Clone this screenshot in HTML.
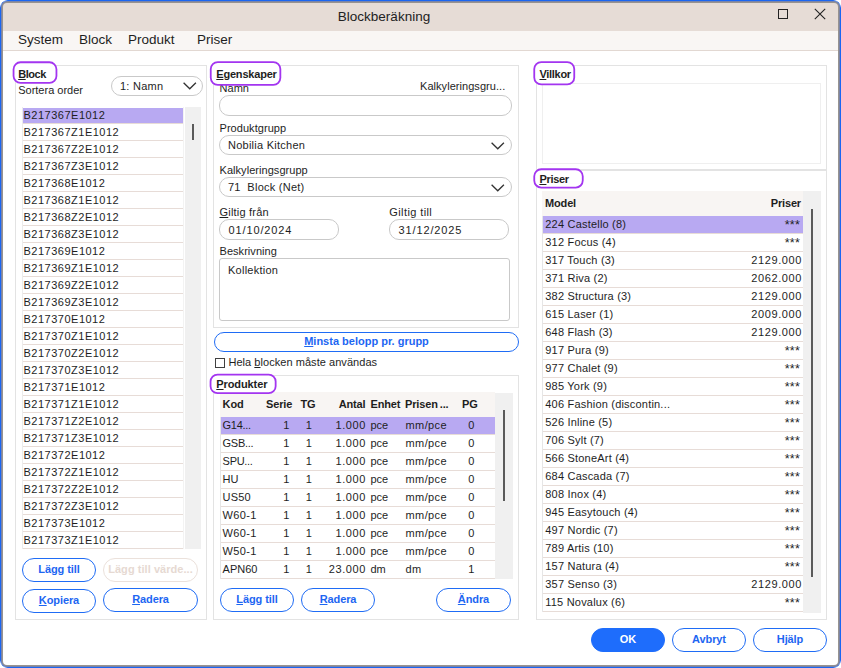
<!DOCTYPE html><html lang="sv"><head><meta charset="utf-8"><title>Blockberäkning</title><style>html,body{margin:0;padding:0;background:#fff;}
body{width:841px;height:668px;overflow:hidden;font-family:"Liberation Sans",sans-serif;font-size:11px;color:#1e1e1e;}
#win{position:absolute;left:0;top:0;width:841px;height:668px;border-radius:8px;background:#fff;overflow:hidden;}
#frame{left:0;top:0;width:841px;height:668px;border:1px solid #1a66f2;border-radius:7px;box-shadow:inset 0 0 0 1px #7a84a8, inset 0 0 0 2px #979390;z-index:10;}
#win *{box-sizing:border-box;}
#win>div,#win>div>span,#win>div>svg{position:absolute;}
#titlebar{left:2px;top:2px;width:837px;height:29px;background:#e6dcd6;}
#title{left:0;width:764px;text-align:center;top:7px;font-size:13.5px;line-height:16px;color:#222;}
#maxi{left:775px;top:6px;}
#closei{left:812px;top:6px;}
#menubar{left:2px;top:31px;width:837px;height:20px;background:#f9f6f4;border-bottom:1px solid #e2d8d2;font-size:13.5px;}
#menubar span{top:1px;line-height:16px;margin-left:-2px;}
.gb{border:1px solid #e3e3e3;}
.glw{z-index:3;}
.glt{position:absolute;font-weight:bold;font-size:11px;line-height:14px;white-space:nowrap;letter-spacing:-0.45px;}
.lbl{white-space:nowrap;line-height:13px;}
.combo,.inp{border:1px solid #c9c9c9;border-radius:10px;background:#fff;}
.ta{border:1px solid #c9c9c9;border-radius:3px;background:#fff;}
.ct{position:absolute;top:3px;line-height:13px;white-space:nowrap;margin-left:-1px;letter-spacing:0.25px;}
.chev{position:absolute;}
.num{letter-spacing:0.6px;}
#blist{left:22px;top:107px;width:162px;border-left:1px solid #ececec;border-right:1px solid #f3f3f3;}
.li{height:17px;line-height:14px;border-top:1px solid #fff;border-bottom:1px solid #e7dcd7;padding-left:0.5px;background-clip:padding-box;letter-spacing:0.5px;white-space:nowrap;}
.li.sel{background-color:#b8a9f2;}
.track{background:#f0f0f0;}
.thumb{width:2px;background:#5a5a5a;}
.btn{height:23px;border:1px solid #1f6cf5;border-radius:12px;background:#fff;color:#1d66f2;font-weight:bold;font-size:11px;letter-spacing:-0.1px;text-align:center;line-height:21px;white-space:nowrap;}
.btn.dis{border-color:#ebe1db;color:#e6d9d2;}
.btn.pri{background:#1e6dfc;border-color:#1e6dfc;color:#fff;}
.cb{width:10px;height:10px;border:1px solid #404040;background:#fff;}
#ptab{left:220px;top:392px;width:275px;}
#prtab{left:542px;top:191px;width:261px;}
.th{position:relative;height:25px;background:#f8f5f3;font-weight:bold;}
.th>span{position:absolute;top:6px;letter-spacing:-0.15px;line-height:13px;white-space:nowrap;}
.tr{position:relative;height:18px;border-bottom:1px solid #e7dcd7;background-clip:padding-box;}
.tr.sel{background-color:#b8a9f2;}
.tr>span{position:absolute;top:2px;line-height:13px;white-space:nowrap;}
.star{font-size:12.5px;top:2.5px !important;letter-spacing:0.2px;}
.vline{width:1px;background:#e6e6e6;z-index:2;}
</style></head><body>
<div id="win">
<div id="titlebar"><span id="title">Blockberäkning</span><svg id="maxi" width="12" height="12" viewBox="0 0 12 12"><rect x="1.5" y="1.5" width="9" height="9" fill="none" stroke="#222" stroke-width="1"/></svg><svg id="closei" width="12" height="12" viewBox="0 0 12 12"><path d="M0.8 0.8 L11.2 11.2 M11.2 0.8 L0.8 11.2" fill="none" stroke="#222" stroke-width="1.1"/></svg></div>
<div id="menubar"><span style="left:18px">System</span><span style="left:79px">Block</span><span style="left:128px">Produkt</span><span style="left:197px">Priser</span></div>
<div class="gb" style="left:15px;top:65px;width:192px;height:555px"></div>
<div class="glw" style="left:11px;top:60px;width:48px;height:26px"><svg width="48" height="26" style="position:absolute;left:0;top:0"><rect x="2.5500000000000007" y="2.25" width="42.900000000000006" height="20.700000000000003" rx="7" ry="7" fill="#fff" stroke="#a335f0" stroke-width="1.8"/></svg><span class="glt" style="left:7.2px;top:7.2px;letter-spacing:-0.45px"><u>B</u>lock</span></div>
<div class="lbl" style="left:18.2px;top:83.6px;letter-spacing:0px">Sortera order</div>
<div class="combo" style="left:111px;top:76px;width:92px;height:20px"><span class="ct" style="left:9px">1: Namn</span><svg class="chev" style="right:5px;top:5px" width="15" height="9" viewBox="0 0 15 9"><path d="M1.6 0.7 L7.75 6.8 L13.9 0.7" fill="none" stroke="#333" stroke-width="1.3"/></svg></div>
<div id="blist">
<div class="li sel">B217367E1012</div>
<div class="li">B217367Z1E1012</div>
<div class="li">B217367Z2E1012</div>
<div class="li">B217367Z3E1012</div>
<div class="li">B217368E1012</div>
<div class="li">B217368Z1E1012</div>
<div class="li">B217368Z2E1012</div>
<div class="li">B217368Z3E1012</div>
<div class="li">B217369E1012</div>
<div class="li">B217369Z1E1012</div>
<div class="li">B217369Z2E1012</div>
<div class="li">B217369Z3E1012</div>
<div class="li">B217370E1012</div>
<div class="li">B217370Z1E1012</div>
<div class="li">B217370Z2E1012</div>
<div class="li">B217370Z3E1012</div>
<div class="li">B217371E1012</div>
<div class="li">B217371Z1E1012</div>
<div class="li">B217371Z2E1012</div>
<div class="li">B217371Z3E1012</div>
<div class="li">B217372E1012</div>
<div class="li">B217372Z1E1012</div>
<div class="li">B217372Z2E1012</div>
<div class="li">B217372Z3E1012</div>
<div class="li">B217373E1012</div>
<div class="li">B217373Z1E1012</div>
</div>
<div class="track" style="left:185px;top:107px;width:16px;height:442px"></div>
<div class="thumb" style="left:192px;top:124px;height:16px"></div>
<div class="btn" style="left:22px;top:558px;width:74px;height:24px;line-height:20px">Lägg till</div>
<div class="btn dis" style="letter-spacing:0.05px;left:103px;top:558px;width:95px;height:24px;line-height:20px">Lägg till värde...</div>
<div class="btn" style="left:22px;top:589px;width:74px;height:24px;line-height:20px"><u>K</u>opiera</div>
<div class="btn" style="left:103px;top:588px;width:95px;height:24px;line-height:20px"><u>R</u>adera</div>
<div class="gb" style="left:213px;top:65px;width:306px;height:263px"></div>
<div class="lbl" style="left:219.5px;top:82.2px;letter-spacing:0.05px">Namn</div>
<div class="glw" style="left:209px;top:60px;width:75px;height:28px"><svg width="75" height="28" style="position:absolute;left:0;top:0"><rect x="1.75" y="2.049999999999997" width="69.60000000000002" height="22.799999999999997" rx="7" ry="7" fill="#fff" stroke="#a335f0" stroke-width="1.8"/></svg><span class="glt" style="left:7.3px;top:6.9px;letter-spacing:-0.2px"><u>E</u>genskaper</span></div>
<div class="lbl" style="left:420px;top:80.2px;letter-spacing:0.05px">Kalkyleringsgru...</div>
<div class="inp" style="left:219px;top:95px;width:293px;height:21px"></div>
<div class="lbl" style="left:219.5px;top:121.95px;letter-spacing:0.05px">Produktgrupp</div>
<div class="combo" style="left:219px;top:135px;width:293px;height:20px"><span class="ct" style="left:9px">Nobilia Kitchen</span><svg class="chev" style="right:6px;top:6px" width="15" height="9" viewBox="0 0 15 9"><path d="M1.6 0.7 L7.75 6.8 L13.9 0.7" fill="none" stroke="#333" stroke-width="1.3"/></svg></div>
<div class="lbl" style="left:219.5px;top:164.45px;letter-spacing:0.05px">Kalkyleringsgrupp</div>
<div class="combo" style="left:219px;top:177px;width:293px;height:20px"><span class="ct" style="left:9px">71&nbsp; Block (Net)</span><svg class="chev" style="right:6px;top:6px" width="15" height="9" viewBox="0 0 15 9"><path d="M1.6 0.7 L7.75 6.8 L13.9 0.7" fill="none" stroke="#333" stroke-width="1.3"/></svg></div>
<div class="lbl" style="left:219.5px;top:205.95px;letter-spacing:0.2px"><u>G</u>iltig från</div>
<div class="lbl" style="left:389.3px;top:205.95px;letter-spacing:0.4px">Giltig till</div>
<div class="inp" style="left:219px;top:219px;width:120px;height:21px"><span class="ct" style="left:9.5px;top:4.25px;letter-spacing:0.88px">01/10/2024</span></div>
<div class="inp" style="left:389px;top:219px;width:120px;height:21px"><span class="ct" style="left:9.5px;top:4.25px;letter-spacing:0.88px">31/12/2025</span></div>
<div class="lbl" style="left:219.5px;top:244.7px;letter-spacing:0.05px">Beskrivning</div>
<div class="ta" style="left:219px;top:258px;width:291px;height:63px"><span class="ct" style="left:9px;top:5.25px">Kollektion</span></div>
<div class="btn" style="left:214px;top:332px;width:305px;height:20px;line-height:16.5px;letter-spacing:0"><u>M</u>insta belopp pr. grupp</div>
<div class="cb" style="left:215px;top:358px"></div>
<div class="lbl" style="left:228.4px;top:355.6px;letter-spacing:0.05px">Hela <u>b</u>locken måste användas</div>
<div class="gb" style="left:213px;top:375px;width:306px;height:245px"></div>
<div class="glw" style="left:208px;top:372px;width:70px;height:24px"><svg width="70" height="24" style="position:absolute;left:0;top:0"><rect x="2.5500000000000114" y="2.5500000000000114" width="65.09999999999997" height="18.599999999999966" rx="7" ry="7" fill="#fff" stroke="#a335f0" stroke-width="1.8"/></svg><span class="glt" style="left:8.3px;top:4.8px;letter-spacing:-0.1px"><u>P</u>rodukter</span></div>
<div id="ptab">
<div class="th"><span style="left:2.6px">Kod</span><span style="left:46px">Serie</span><span style="left:80.5px">TG</span><span style="right:129.5px">Antal</span><span style="left:150.5px">Enhet</span><span style="left:185px">Prisen<span style="position:static;margin-left:2px">...</span></span><span style="left:242px">PG</span></div>
<div class="tr sel"><span style="left:2.6px;letter-spacing:-0.3px">G14...</span><span class="num" style="right:205px">1</span><span class="num" style="right:182.5px">1</span><span class="num" style="right:129px">1.000</span><span style="left:150.5px">pce</span><span style="left:185.5px;letter-spacing:0.4px">mm/pce</span><span class="num" style="right:20px">0</span></div>
<div class="tr"><span style="left:2.6px;letter-spacing:-0.3px">GSB...</span><span class="num" style="right:205px">1</span><span class="num" style="right:182.5px">1</span><span class="num" style="right:129px">1.000</span><span style="left:150.5px">pce</span><span style="left:185.5px;letter-spacing:0.4px">mm/pce</span><span class="num" style="right:20px">0</span></div>
<div class="tr"><span style="left:2.6px;letter-spacing:-0.3px">SPU...</span><span class="num" style="right:205px">1</span><span class="num" style="right:182.5px">1</span><span class="num" style="right:129px">1.000</span><span style="left:150.5px">pce</span><span style="left:185.5px;letter-spacing:0.4px">mm/pce</span><span class="num" style="right:20px">0</span></div>
<div class="tr"><span style="left:2.6px;letter-spacing:0px">HU</span><span class="num" style="right:205px">1</span><span class="num" style="right:182.5px">1</span><span class="num" style="right:129px">1.000</span><span style="left:150.5px">pce</span><span style="left:185.5px;letter-spacing:0.4px">mm/pce</span><span class="num" style="right:20px">0</span></div>
<div class="tr"><span style="left:2.6px;letter-spacing:0.2px">US50</span><span class="num" style="right:205px">1</span><span class="num" style="right:182.5px">1</span><span class="num" style="right:129px">1.000</span><span style="left:150.5px">pce</span><span style="left:185.5px;letter-spacing:0.4px">mm/pce</span><span class="num" style="right:20px">0</span></div>
<div class="tr"><span style="left:2.6px;letter-spacing:0.35px">W60-1</span><span class="num" style="right:205px">1</span><span class="num" style="right:182.5px">1</span><span class="num" style="right:129px">1.000</span><span style="left:150.5px">pce</span><span style="left:185.5px;letter-spacing:0.4px">mm/pce</span><span class="num" style="right:20px">0</span></div>
<div class="tr"><span style="left:2.6px;letter-spacing:0.35px">W60-1</span><span class="num" style="right:205px">1</span><span class="num" style="right:182.5px">1</span><span class="num" style="right:129px">1.000</span><span style="left:150.5px">pce</span><span style="left:185.5px;letter-spacing:0.4px">mm/pce</span><span class="num" style="right:20px">0</span></div>
<div class="tr"><span style="left:2.6px;letter-spacing:0.35px">W50-1</span><span class="num" style="right:205px">1</span><span class="num" style="right:182.5px">1</span><span class="num" style="right:129px">1.000</span><span style="left:150.5px">pce</span><span style="left:185.5px;letter-spacing:0.4px">mm/pce</span><span class="num" style="right:20px">0</span></div>
<div class="tr"><span style="left:2.6px;letter-spacing:0px">APN60</span><span class="num" style="right:205px">1</span><span class="num" style="right:182.5px">1</span><span class="num" style="right:129px">23.000</span><span style="left:150.5px">dm</span><span style="left:185.5px;letter-spacing:0.4px">dm</span><span class="num" style="right:20px">1</span></div>
</div>
<div class="track" style="left:495px;top:393px;width:18px;height:186px"></div>
<div class="thumb" style="left:503px;top:410px;height:91px"></div>
<div class="btn" style="left:220px;top:588px;width:74px;height:24px;line-height:20px"><u>L</u>ägg till</div>
<div class="btn" style="left:301px;top:588px;width:74px;height:24px;line-height:20px"><u>R</u>adera</div>
<div class="btn" style="left:436px;top:588px;width:75px;height:24px;line-height:20px"><u>Ä</u>ndra</div>
<div class="gb" style="left:536px;top:65px;width:291px;height:105px"></div>
<div class="gb" style="left:542px;top:83px;width:279px;height:81px;border-color:#efefef"></div>
<div class="glw" style="left:532px;top:60px;width:45px;height:27px"><svg width="45" height="27" style="position:absolute;left:0;top:0"><rect x="2.25" y="2.049999999999997" width="40.0" height="22.400000000000006" rx="7" ry="7" fill="#fff" stroke="#a335f0" stroke-width="1.8"/></svg><span class="glt" style="left:7.5px;top:6.9px;letter-spacing:-0.3px"><u>V</u>illkor</span></div>
<div class="gb" style="left:536px;top:170px;width:291px;height:450px"></div>
<div class="glw" style="left:532px;top:167px;width:54px;height:23px"><svg width="54" height="23" style="position:absolute;left:0;top:0"><rect x="2.25" y="2.25" width="48.5" height="18.30000000000001" rx="7" ry="7" fill="#fff" stroke="#a335f0" stroke-width="1.8"/></svg><span class="glt" style="left:7.4px;top:4.8px;letter-spacing:-0.3px"><u>P</u>riser</span></div>
<div id="prtab">
<div class="th"><span style="left:3px">Model</span><span style="right:2px">Priser</span></div>
<div class="tr sel"><span style="left:3.3px;letter-spacing:0.2px">224 Castello (8)</span><span class="star" style="right:3px">***</span></div>
<div class="tr"><span style="left:3.3px;letter-spacing:0.2px">312 Focus (4)</span><span class="star" style="right:3px">***</span></div>
<div class="tr"><span style="left:3.3px;letter-spacing:0.2px">317 Touch (3)</span><span class="num" style="right:1px">2129.000</span></div>
<div class="tr"><span style="left:3.3px;letter-spacing:0.2px">371 Riva (2)</span><span class="num" style="right:1px">2062.000</span></div>
<div class="tr"><span style="left:3.3px;letter-spacing:0.2px">382 Structura (3)</span><span class="num" style="right:1px">2129.000</span></div>
<div class="tr"><span style="left:3.3px;letter-spacing:0.2px">615 Laser (1)</span><span class="num" style="right:1px">2009.000</span></div>
<div class="tr"><span style="left:3.3px;letter-spacing:0.2px">648 Flash (3)</span><span class="num" style="right:1px">2129.000</span></div>
<div class="tr"><span style="left:3.3px;letter-spacing:0.2px">917 Pura (9)</span><span class="star" style="right:3px">***</span></div>
<div class="tr"><span style="left:3.3px;letter-spacing:0.2px">977 Chalet (9)</span><span class="star" style="right:3px">***</span></div>
<div class="tr"><span style="left:3.3px;letter-spacing:0.2px">985 York (9)</span><span class="star" style="right:3px">***</span></div>
<div class="tr"><span style="left:3.3px;letter-spacing:0.2px">406 Fashion (discontin...</span><span class="star" style="right:3px">***</span></div>
<div class="tr"><span style="left:3.3px;letter-spacing:0.2px">526 Inline (5)</span><span class="star" style="right:3px">***</span></div>
<div class="tr"><span style="left:3.3px;letter-spacing:0.2px">706 Sylt (7)</span><span class="star" style="right:3px">***</span></div>
<div class="tr"><span style="left:3.3px;letter-spacing:0.2px">566 StoneArt (4)</span><span class="star" style="right:3px">***</span></div>
<div class="tr"><span style="left:3.3px;letter-spacing:0.2px">684 Cascada (7)</span><span class="star" style="right:3px">***</span></div>
<div class="tr"><span style="left:3.3px;letter-spacing:0.2px">808 Inox (4)</span><span class="star" style="right:3px">***</span></div>
<div class="tr"><span style="left:3.3px;letter-spacing:0.2px">945 Easytouch (4)</span><span class="star" style="right:3px">***</span></div>
<div class="tr"><span style="left:3.3px;letter-spacing:0.2px">497 Nordic (7)</span><span class="star" style="right:3px">***</span></div>
<div class="tr"><span style="left:3.3px;letter-spacing:0.2px">789 Artis (10)</span><span class="star" style="right:3px">***</span></div>
<div class="tr"><span style="left:3.3px;letter-spacing:0.2px">157 Natura (4)</span><span class="star" style="right:3px">***</span></div>
<div class="tr"><span style="left:3.3px;letter-spacing:0.2px">357 Senso (3)</span><span class="num" style="right:1px">2129.000</span></div>
<div class="tr"><span style="left:3.3px;letter-spacing:0.2px">115 Novalux (6)</span><span class="star" style="right:3px">***</span></div>
</div>
<div class="vline" style="left:542px;top:216px;height:396px"></div>
<div class="vline" style="left:220px;top:417px;height:162px"></div>
<div class="track" style="left:803px;top:191px;width:18px;height:422px"></div>
<div class="thumb" style="left:811px;top:209px;height:368px"></div>
<div class="btn pri" style="left:591px;top:628px;width:74px;height:24px;line-height:21px">OK</div>
<div class="btn" style="left:672px;top:628px;width:74px;height:24px;line-height:20.5px">Avbryt</div>
<div class="btn" style="left:753px;top:628px;width:74px;height:24px;line-height:20.5px">Hjälp</div>
<div id="frame"></div>
</div></body></html>
